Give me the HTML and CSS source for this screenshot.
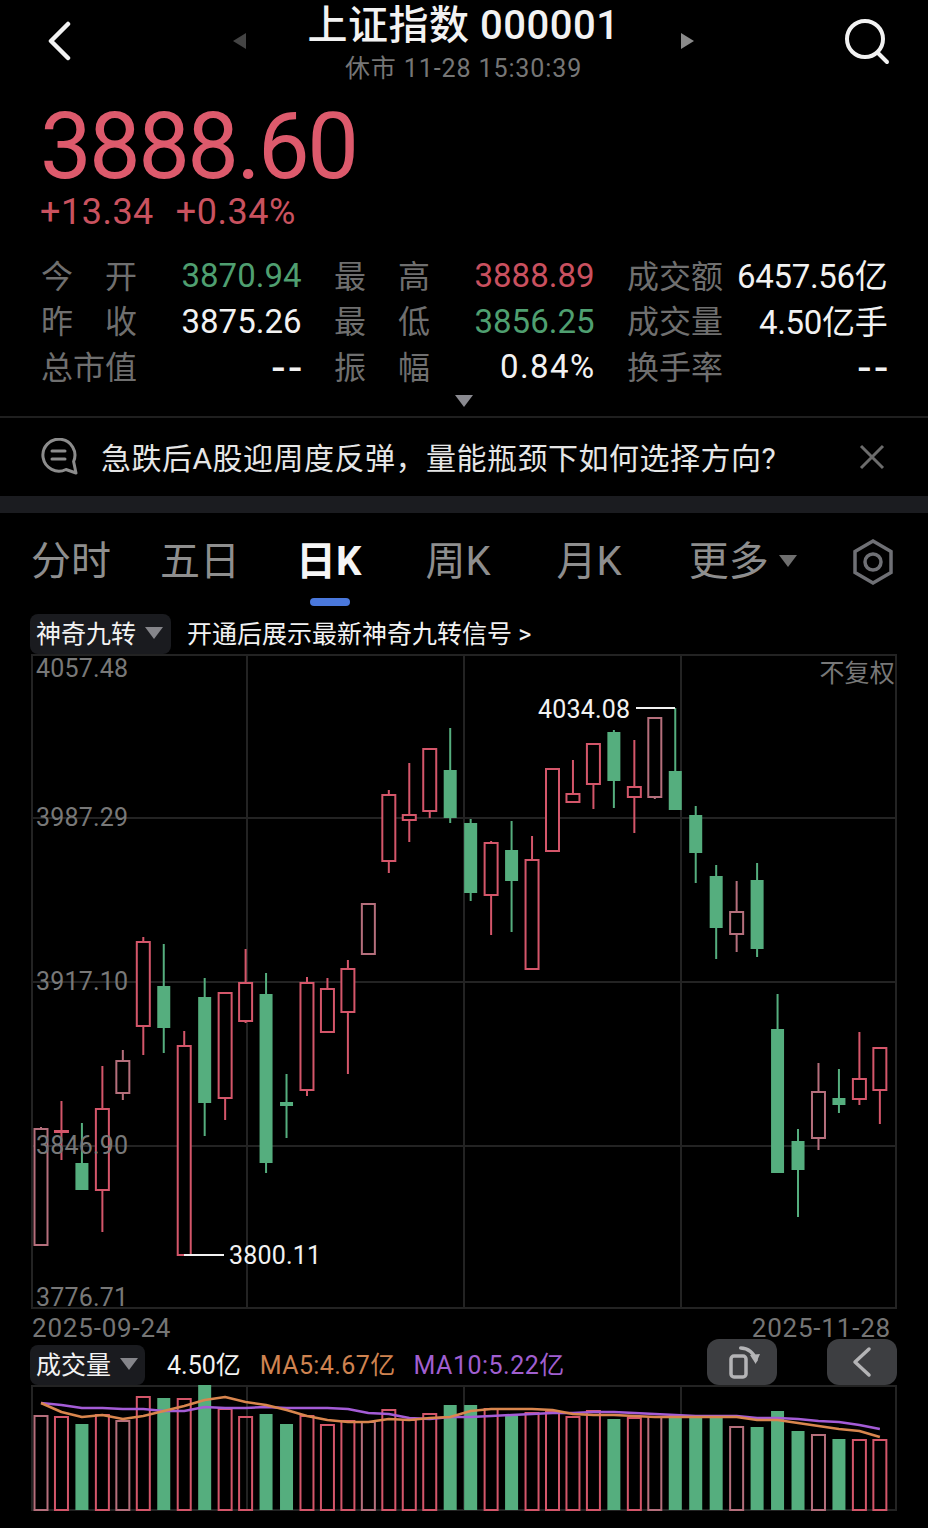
FILE: index.html
```html
<!DOCTYPE html>
<html lang="zh-CN">

<head>
    <meta charset="UTF-8">
    <meta name="viewport" content="width=device-width, initial-scale=1.0">
    <title>上证指数 000001</title>
    <link rel="stylesheet" href="styles.css">
</head>

<body>
    <header class="topbar">
        <svg class="back" width="26" height="40" viewBox="0 0 26 40"><path d="M22 3 L5 20 L22 37" /></svg>
        <div class="title-wrap">
            <span class="arrow-left"></span>
            <div class="title-text">
                <div class="title">上证指数 000001</div>
                <div class="subtitle">休市 11-28 15:30:39</div>
            </div>
            <span class="arrow-right"></span>
        </div>
        <svg class="search" width="48" height="48" viewBox="0 0 48 48">
            <circle cx="23" cy="22" r="18" />
            <path d="M36 36 L45 45" />
        </svg>
    </header>

    <section class="quote">
        <div class="price">3888.60</div>
        <div class="change"><span>+13.34</span><span>+0.34%</span></div>
    </section>

    <section class="stats">
        <div class="stats-col">
            <div class="label spread"><span>今</span><span>开</span></div>
            <div class="value green">3870.94</div>
            <div class="label spread"><span>昨</span><span>收</span></div>
            <div class="value">3875.26</div>
            <div class="label">总市值</div>
            <div class="value dash">--</div>
        </div>
        <div class="stats-col">
            <div class="label spread"><span>最</span><span>高</span></div>
            <div class="value red">3888.89</div>
            <div class="label spread"><span>最</span><span>低</span></div>
            <div class="value green">3856.25</div>
            <div class="label spread"><span>振</span><span>幅</span></div>
            <div class="value pct">0.84%</div>
        </div>
        <div class="stats-col">
            <div class="label">成交额</div>
            <div class="value cjk">6457.56亿</div>
            <div class="label">成交量</div>
            <div class="value cjk">4.50亿手</div>
            <div class="label">换手率</div>
            <div class="value dash">--</div>
        </div>
    </section>

    <div class="expand"><span class="tri"></span></div>

    <section class="news">
        <svg class="bubble" width="38" height="38" viewBox="0 0 38 38">
            <path d="M35 35 L25 31.5 A16 16 0 1 1 32.6 23.5 Z" />
            <path d="M11 13 H24 M11 21 H24" />
        </svg>
        <div class="news-text">急跌后A股迎周度反弹，量能瓶颈下如何选择方向?</div>
        <svg class="close" width="28" height="28" viewBox="0 0 28 28"><path d="M3 3 L25 25 M25 3 L3 25" /></svg>
    </section>

    <div class="band"></div>

    <nav class="tabs">
        <span class="tab tab-1">分时</span>
        <span class="tab tab-2">五日</span>
        <span class="tab tab-3 active">日K</span>
        <span class="tab tab-4">周K</span>
        <span class="tab tab-5">月K</span>
        <span class="tab tab-6">更多<span class="tri tri-more"></span></span>
        <svg class="gear" width="44" height="48" viewBox="0 0 44 48">
            <path d="M22 3 L40 13.5 V34.5 L22 45 L4 34.5 V13.5 Z" />
            <circle cx="22" cy="24" r="8" />
        </svg>
    </nav>

    <div class="indicator-row">
        <div class="chip">神奇九转<span class="tri"></span></div>
        <div class="promo">开通后展示最新神奇九转信号 &gt;</div>
    </div>

    <svg id="kline" class="kline" width="870" height="658" viewBox="30 652 870 658"></svg>

    <div class="dates"><span>2025-09-24</span><span>2025-11-28</span></div>

    <div class="vol-row">
        <div class="chip chip-vol">成交量<span class="tri"></span></div>
        <span class="vol-now">4.50亿</span>
        <span class="ma5">MA5:4.67亿</span>
        <span class="ma10">MA10:5.22亿</span>
        <div class="btn btn-rotate">
            <svg width="44" height="40" viewBox="0 0 44 40">
                <rect x="11" y="14" width="15" height="21" rx="3" />
                <path d="M20.7 6 C28 6 34 11 36 18" />
                <path class="fill" d="M30 13 L40 12 L35.7 22 Z" />
            </svg>
        </div>
        <div class="btn btn-back">
            <svg width="24" height="32" viewBox="0 0 24 32"><path d="M19 3 L5 16 L19 29" /></svg>
        </div>
    </div>

    <svg id="volume" class="volume" width="870" height="128" viewBox="30 1385 870 128"></svg>

    <script src="chart.js"></script>
</body>

</html>
```
FILE: styles.css
```css
* {
    box-sizing: border-box;
}

body {
    margin: 0;
    width: 928px;
    height: 1528px;
    overflow: hidden;
    background-color: #000;
    color: #f2f2f2;
    font-family: Roboto, "Noto Sans CJK SC", sans-serif;
}

svg {
    display: block;
    fill: none;
}

/* top bar */
.topbar {
    height: 92px;
    display: flex;
    justify-content: space-between;
    padding: 21px 38px 0 46px;
    position: relative;
}

.back path {
    stroke: #f2f2f2;
    stroke-width: 4.5;
    stroke-linecap: round;
    stroke-linejoin: round;
}

.search {
    margin-top: -4px;
}

.search path,
.search circle {
    stroke: #f2f2f2;
    stroke-width: 4;
    stroke-linecap: round;
}

.title-wrap {
    position: absolute;
    left: 233px;
    width: 461px;
    top: 0;
    display: flex;
    justify-content: space-between;
    align-items: flex-start;
}

.title-text {
    text-align: center;
}

.title {
    font-size: 40px;
    font-weight: 500;
    line-height: 51px;
    letter-spacing: 0.5px;
    white-space: nowrap;
}

.subtitle {
    font-size: 25px;
    line-height: 36px;
    color: #767676;
    letter-spacing: 0.9px;
}

.arrow-left,
.arrow-right {
    margin-top: 33px;
    width: 0;
    height: 0;
    border-top: 8px solid transparent;
    border-bottom: 8px solid transparent;
}

.arrow-left {
    border-right: 13px solid #444;
}

.arrow-right {
    border-left: 13px solid #8a8a8a;
}

/* price */
.quote {
    height: 161px;
    padding: 13px 0 0 40px;
    color: #dd5a6c;
}

.price {
    font-size: 92px;
    line-height: 84px;
    letter-spacing: -2.6px;
}

.change {
    display: flex;
    gap: 22px;
    margin-top: 5px;
    font-size: 36px;
    line-height: 36px;
    letter-spacing: 0.5px;
    color: #c9525f;
}

/* stats table */
.stats {
    display: flex;
    gap: 32.5px;
    padding-left: 41px;
}

.stats-col {
    display: grid;
    grid-template-columns: 96px 164.5px;
    grid-auto-rows: 45.5px;
    align-items: center;
}

.label {
    color: #6f6f6f;
    font-size: 32px;
    margin-bottom: 4px;
}

.spread {
    display: flex;
    justify-content: space-between;
}

.value {
    text-align: right;
    font-size: 33px;
    white-space: nowrap;
}

.pct {
    letter-spacing: 1.4px;
    margin-right: -1px;
}

.cjk {
    margin-bottom: 3px;
    letter-spacing: -0.3px;
}

.dash {
    font-size: 46px;
    line-height: 40px;
    letter-spacing: 4px;
    margin-right: -4px;
}

.green {
    color: #4f9f70;
}

.red {
    color: #c9505f;
}

.tri {
    display: inline-block;
    width: 0;
    height: 0;
    border-left: 9px solid transparent;
    border-right: 9px solid transparent;
    border-top: 12px solid #8a8a90;
}

.expand {
    height: 28.5px;
    border-bottom: 2px solid #1f1f1f;
    text-align: center;
    line-height: 0;
    padding-top: 5px;
}

/* news strip */
.news {
    height: 78px;
    display: flex;
    align-items: center;
    padding-left: 41px;
}

.bubble path {
    stroke: #8c8c8c;
    stroke-width: 3;
    stroke-linejoin: round;
    stroke-linecap: round;
}

.news-text {
    margin: 0 0 3px 22px;
    width: 690px;
    font-size: 30px;
    letter-spacing: 0.5px;
    white-space: nowrap;
    color: #e6e6e6;
}

.close {
    margin-left: 67px;
}

.close path {
    stroke: #6c6c6c;
    stroke-width: 3;
}

.band {
    height: 17px;
    background-color: #1b1c20;
}

/* tabs */
.tabs {
    height: 97px;
    position: relative;
    padding-top: 24px;
    display: flex;
}

.tab {
    font-size: 40px;
    line-height: 50px;
    color: #8e8e8e;
    white-space: nowrap;
}

.tab-1 {
    margin-left: 31px;
}

.tab-2 {
    margin-left: 49px;
}

.tab-3 {
    margin-left: 56px;
}

.tab-4 {
    margin-left: 64px;
}

.tab-5 {
    margin-left: 66px;
}

.tab-6 {
    margin-left: 67px;
}

.active {
    color: #f5f5f5;
    font-weight: 700;
    position: relative;
}

.active::after {
    content: "";
    position: absolute;
    left: 14px;
    top: 61px;
    width: 40px;
    height: 8px;
    border-radius: 4px;
    background-color: #4a78dc;
}

.tri-more {
    margin-left: 10px;
    vertical-align: 8px;
    border-top-color: #6f6f6f;
}

.gear {
    position: absolute;
    left: 851px;
    top: 25px;
}

.gear path,
.gear circle {
    stroke: #6f7075;
    stroke-width: 3.5;
}

/* indicator row */
.indicator-row {
    height: 42px;
    display: flex;
    align-items: flex-start;
    padding: 4px 0 0 30px;
}

.chip {
    width: 141px;
    height: 40px;
    border-radius: 8px;
    background-color: #1a1b1f;
    padding-left: 6px;
    font-size: 25px;
    line-height: 41px;
    white-space: nowrap;
}

.chip .tri {
    margin-left: 9px;
    vertical-align: 4px;
    border-top-color: #85858a;
}

.promo {
    margin-left: 16px;
    font-size: 25px;
    line-height: 41px;
}

/* charts */
.kline {
    margin-left: 30px;
    overflow: visible;
}

.axis-label {
    font-size: 25px;
    fill: #787878;
    letter-spacing: 0.2px;
}

.mark-label {
    font-size: 25px;
    fill: #f2f2f2;
    letter-spacing: 0.2px;
}

.dates {
    height: 29px;
    display: flex;
    justify-content: space-between;
    padding: 0 37px 0 32px;
    font-size: 26px;
    line-height: 36px;
    color: #757575;
    letter-spacing: 0.8px;
}

.vol-row {
    height: 46px;
    position: relative;
    padding-top: 6px;
    font-size: 25px;
    line-height: 41px;
    display: flex;
    white-space: nowrap;
}

.chip-vol {
    margin-left: 30px;
    width: 115px;
    height: 40px;
}

.vol-now {
    margin-left: 22px;
    color: #f2f2f2;
}

.ma5 {
    margin-left: 19px;
    color: #cf8350;
    letter-spacing: 0.4px;
}

.ma10 {
    margin-left: 18px;
    color: #a05fd0;
    letter-spacing: 0.5px;
}

.btn {
    position: absolute;
    top: 0;
    height: 46px;
    width: 70px;
    border-radius: 12px;
    background-color: #3d3e41;
    display: flex;
    justify-content: center;
    align-items: center;
}

.btn path,
.btn rect {
    stroke: #b4b4b6;
    stroke-width: 3.5;
    stroke-linejoin: round;
    stroke-linecap: round;
}

.btn path.fill {
    fill: #b4b4b6;
    stroke: none;
}

.btn-rotate {
    left: 707px;
}

.btn-back {
    left: 827px;
}

.volume {
    margin-left: 30px;
}
```
FILE: chart.js
```js
// [high, bodyTop, bodyBottom, low, type]  r = red hollow, p = pale red hollow, g = green filled
const candles = [
    [1127, 1129, 1245, 1245, "p"],
    [1101, 1131, 1131, 1160, "r"],
    [1123, 1163, 1190, 1190, "g"],
    [1066, 1109, 1190, 1232, "r"],
    [1050, 1061, 1093, 1100, "p"],
    [937, 942, 1026, 1055, "r"],
    [944, 986, 1028, 1053, "g"],
    [1031, 1046, 1255, 1255, "r"],
    [978, 997, 1103, 1136, "g"],
    [992, 993, 1098, 1120, "r"],
    [949, 983, 1021, 1023, "r"],
    [973, 994, 1163, 1173, "g"],
    [1074, 1102, 1106, 1138, "g"],
    [977, 983, 1090, 1096, "r"],
    [978, 989, 1032, 1032, "r"],
    [960, 969, 1012, 1074, "r"],
    [904, 904, 954, 954, "p"],
    [790, 795, 861, 873, "r"],
    [763, 815, 820, 842, "r"],
    [749, 749, 811, 818, "r"],
    [728, 770, 818, 823, "g"],
    [819, 823, 893, 901, "g"],
    [841, 843, 895, 935, "r"],
    [821, 850, 881, 932, "g"],
    [836, 860, 969, 969, "r"],
    [768, 769, 851, 851, "r"],
    [760, 794, 802, 802, "r"],
    [744, 744, 784, 809, "r"],
    [730, 732, 781, 808, "g"],
    [740, 787, 797, 833, "r"],
    [718, 718, 797, 799, "p"],
    [708, 771, 810, 810, "g"],
    [806, 815, 853, 883, "g"],
    [865, 876, 928, 959, "g"],
    [881, 912, 934, 952, "p"],
    [863, 880, 949, 957, "g"],
    [994, 1029, 1173, 1173, "g"],
    [1129, 1141, 1170, 1217, "g"],
    [1063, 1092, 1138, 1150, "p"],
    [1069, 1098, 1105, 1113, "g"],
    [1032, 1079, 1099, 1105, "r"],
    [1048, 1048, 1090, 1124, "r"]
];

const volumeTops = [
    1416, 1417, 1424, 1415, 1421, 1397, 1398, 1399, 1385, 1409, 1417, 1414, 1424, 1416,
    1425, 1421, 1422, 1410, 1420, 1414, 1405, 1405, 1409, 1416, 1413, 1412, 1417, 1411,
    1419, 1418, 1417, 1417, 1417, 1417, 1427, 1427, 1411, 1431, 1435, 1439, 1440, 1440
];

const ma10 = [1403, 1405, 1408, 1408, 1409, 1409, 1411, 1411, 1407, 1408, 1408, 1407, 1408, 1408, 1408, 1409, 1413, 1414, 1418, 1419, 1417, 1417, 1416, 1415, 1414, 1413, 1413, 1412, 1412, 1413, 1414, 1415, 1416, 1416, 1416, 1418, 1418, 1419, 1421, 1422, 1425, 1429];
const ma5 = [1403, 1412, 1417, 1415, 1419, 1416, 1411, 1406, 1400, 1397, 1402, 1405, 1410, 1416, 1420, 1422, 1422, 1419, 1420, 1418, 1417, 1411, 1409, 1409, 1409, 1410, 1414, 1415, 1415, 1416, 1417, 1417, 1417, 1417, 1417, 1420, 1420, 1423, 1426, 1429, 1431, 1437];

const RED = "#d4566a";
const PALE = "#b56f7c";
const GREEN = "#55ae7e";
const GRID = "#232323";
const STEP = 20.46;

function xAt(i) {
    return 41 + i * STEP;
}

function colorOf(type) {
    if (type === "g") return GREEN;
    return type === "p" ? PALE : RED;
}

function rect(x, y, w, h, fill, stroke) {
    return `<rect x="${x}" y="${y}" width="${w}" height="${h}" fill="${fill}" stroke="${stroke}" stroke-width="${stroke === "none" ? 0 : 2}"/>`;
}

function line(x1, y1, x2, y2, color, width) {
    return `<line x1="${x1}" y1="${y1}" x2="${x2}" y2="${y2}" stroke="${color}" stroke-width="${width}"/>`;
}

function label(text, x, y, cls, anchor) {
    return `<text x="${x}" y="${y}" class="${cls}" text-anchor="${anchor || "start"}">${text}</text>`;
}

function polyline(values, color) {
    const points = values.map((y, i) => xAt(i) + "," + y).join(" ");
    return `<polyline points="${points}" fill="none" stroke="${color}" stroke-width="2.5" stroke-linejoin="round"/>`;
}

function drawCandle(c, i) {
    const x = xAt(i);
    const color = colorOf(c[4]);
    let out = line(x, c[0], x, c[3], color, 2);
    if (c[4] === "g") {
        out += rect(x - 6.5, c[1], 13, Math.max(c[2] - c[1], 2), GREEN, "none");
    } else {
        out += rect(x - 6.5, c[1], 13, Math.max(c[2] - c[1], 1), "#000", color);
    }
    return out;
}

function drawKline() {
    let out = rect(32, 655, 864, 653, "none", GRID);
    [247, 464, 681].forEach(x => { out += line(x, 655, x, 1308, GRID, 2); });
    [818, 982, 1146].forEach(y => { out += line(32, y, 896, y, GRID, 2); });

    out += candles.map(drawCandle).join("");

    out += line(184, 1255, 224, 1255, "#f2f2f2", 2);
    out += line(636, 708, 675, 708, "#f2f2f2", 2);

    out += label("4057.48", 36, 677, "axis-label");
    out += label("3987.29", 36, 826, "axis-label");
    out += label("3917.10", 36, 990, "axis-label");
    out += label("3846.90", 36, 1154, "axis-label");
    out += label("3776.71", 36, 1306, "axis-label");
    out += label("不复权", 895, 682, "axis-label", "end");
    out += label("4034.08", 538, 718, "mark-label");
    out += label("3800.11", 229, 1264, "mark-label");
    document.getElementById("kline").innerHTML = out;
}

function drawVolume() {
    let out = rect(32, 1386, 864, 124, "none", GRID);
    [247, 464, 681].forEach(x => { out += line(x, 1386, x, 1510, GRID, 2); });

    volumeTops.forEach((top, i) => {
        const type = candles[i][4];
        const x = xAt(i);
        if (type === "g") {
            out += rect(x - 6.5, top, 13, 1510 - top, GREEN, "none");
        } else {
            out += rect(x - 6.5, top, 13, 1510 - top, "none", colorOf(type));
        }
    });

    out += polyline(ma10, "#a45cd6");
    out += polyline(ma5, "#d9864e");
    document.getElementById("volume").innerHTML = out;
}

drawKline();
drawVolume();
```
